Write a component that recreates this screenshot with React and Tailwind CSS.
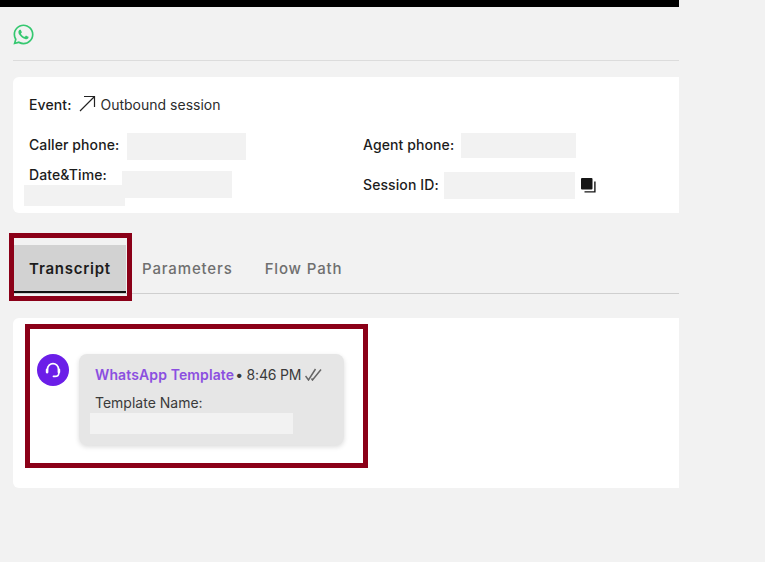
import React from "react";
import { FaWhatsapp } from "react-icons/fa";

// grey patches that hide values in the screenshot
function Patch({ className }) {
  return <div className={"bg-[#f2f2f2] shrink-0 " + className} />;
}

function Label({ children, className = "" }) {
  return <span className={"text-[14px] leading-5 font-medium tracking-[0.1px] text-[#1c1c1c] " + className}>{children}</span>;
}

export default function App() {
  return (
    <div className="relative w-[765px] h-[562px] overflow-hidden bg-[#f2f2f2] font-['Inter',sans-serif]">
      <div className="w-[679px]">
        <div className="h-[7px] bg-black" />

        {/* Header */}
        <div className="ml-[13px] h-[54px] border-b border-[#dcdcdc] pt-[15.5px]">
          <FaWhatsapp className="-ml-[1.5px] w-[23px] h-[23px] text-[#35c870]" />
        </div>

        {/* Session info */}
        <div className="relative ml-[13px] mt-[16px] h-[136px] bg-white rounded-l-[6px] pl-[16px] pt-[18px]">
          <div className="flex items-center h-5">
            <Label>Event:</Label>
            <svg className="ml-[8px] w-[17px] h-[17px] -mt-[3px]" viewBox="0 0 17 17" fill="none" stroke="#222" strokeWidth="1.2">
              <path d="M1 16 L15.5 1.5 M5 1.5 H15.5 V12" />
            </svg>
            <span className="ml-[4px] text-[14px] leading-5 text-[#2c2c2c]">Outbound session</span>
          </div>

          <div className="grid grid-cols-[334px_1fr] mt-[18px]">
            <div className="flex items-center h-[27px]">
              <Label className="-mt-[3px]">Caller phone:</Label>
              <Patch className="ml-[8px] w-[119px] h-[27px]" />
            </div>
            <div className="flex items-center h-[27px]">
              <Label className="-mt-[3px]">Agent phone:</Label>
              <Patch className="ml-[7px] w-[115px] h-[25px] -mt-[2px]" />
            </div>
            <div className="flex items-start h-[27px] mt-[11px]">
              <Label className="mt-[-6px]">Date&amp;Time:</Label>
              <Patch className="ml-[15px] w-[110px] h-[27px]" />
            </div>
            <div className="flex items-center h-[27px] mt-[12px]">
              <Label className="-mt-[2px]">Session ID:</Label>
              <Patch className="ml-[5px] w-[131px] h-[27px]" />
              <svg className="ml-[6px] w-[15px] h-[15px]" viewBox="0 0 15 15" fill="#161616">
                <rect x="0" y="0" width="11.5" height="11.5" rx="1" />
                <path d="M13.2 3.5 H14.6 V14.6 H3.5 V13.2 H13.2 Z" />
              </svg>
            </div>
          </div>

          {/* second line of the date patch spills past the row */}
          <Patch className="absolute left-[11px] top-[108px] w-[101px] h-[21px]" />
        </div>

        {/* Tabs */}
        <div className="ml-[13px] mt-[32px] h-[49px] flex border-b border-[#cfcfcf] text-[15px] font-medium tracking-[0.85px]">
          <div className="ml-px w-[112px] h-[48px] bg-[#d2d2d2] border-b-2 border-[#111] flex items-center justify-center font-semibold tracking-[0.75px] text-[#1c1c1c] pt-[3px]">
            Transcript
          </div>
          <div className="ml-[16px] flex items-center text-[#6f6f6f] pt-[1px]">Parameters</div>
          <div className="ml-[32px] flex items-center text-[#6f6f6f] pt-[1px]">Flow Path</div>
        </div>

        {/* Transcript */}
        <div className="ml-[13px] mt-[24px] h-[170px] bg-white rounded-l-[6px] pl-[24px] pt-[36px]">
          <div className="flex items-start gap-[10px]">
            <div className="w-[32px] h-[32px] rounded-full bg-[#6b1ee8] flex items-center justify-center">
              <svg className="w-[18px] h-[18px]" viewBox="0 0 18 18" fill="none" stroke="white" strokeWidth="1.6" strokeLinecap="round">
                <path d="M3.6 8 a5.4 5.4 0 0 1 10.8 0" />
                <rect x="1.8" y="7.6" width="2.6" height="4.8" rx="1.1" fill="white" stroke="none" />
                <rect x="13.6" y="7.6" width="2.6" height="4.8" rx="1.1" fill="white" stroke="none" />
                <path d="M14.8 12 Q14.8 15.4 11 15.4 H9.4" />
              </svg>
            </div>
            <div className="w-[265px] h-[91px] bg-[#e6e6e6] rounded-[8px] shadow-[0_2px_5px_rgba(0,0,0,0.14)] pl-[16px] pt-[10px]">
              <div className="flex items-center h-5 text-[14px]">
                <span className="font-semibold tracking-[0.12px] text-[#8b4fe0]">WhatsApp Template</span>
                <span className="ml-[1px] tracking-[-0.2px] text-[#3a3a3a]">• 8:46 PM</span>
                <svg className="ml-[4px] w-[17px] h-[13px]" viewBox="0 0 17 13" fill="none" stroke="#666" strokeWidth="1.5">
                  <path d="M0.5 8 L3.5 12 L10.5 1 M6.5 10.5 L7.5 12 L16 1.5" />
                </svg>
              </div>
              <div className="mt-[9px] text-[14px] leading-5 text-[#3a3a3a]">Template Name:</div>
              <Patch className="-ml-[5px] w-[203px] h-[21px]" />
            </div>
          </div>
        </div>
      </div>

      {/* Red highlight boxes drawn on top of the screenshot */}
      <div className="absolute left-[9px] top-[233px] w-[123px] h-[68px] border-[5px] border-[#8b0018]" />
      <div className="absolute left-[25px] top-[324px] w-[343px] h-[144px] border-[5px] border-[#8b0018]" />
    </div>
  );
}
